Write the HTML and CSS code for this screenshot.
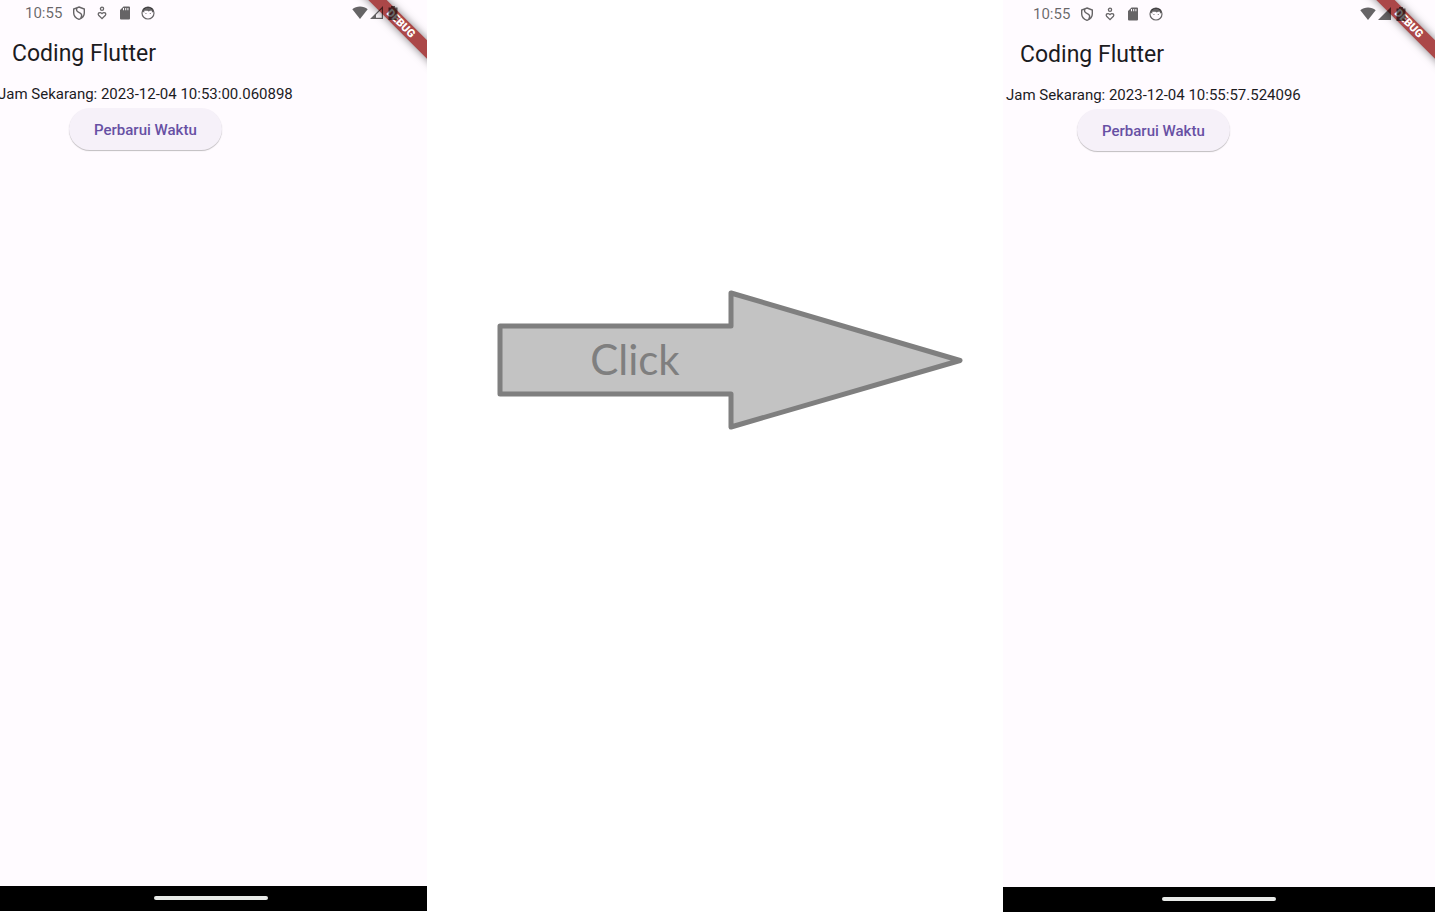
FILE: index.html
```html
<!DOCTYPE html>
<html lang="id">
<head>
<meta charset="utf-8">
<meta name="viewport" content="width=device-width, initial-scale=1">
<title>Coding Flutter</title>
<link rel="stylesheet" href="styles.css">
</head>
<body>
<svg class="defs" aria-hidden="true">
  <symbol id="shield" viewBox="0 0 14 14"><path d="M7 1 12.300 3v4c0 3-2.200 5.200-5.300 6.300C3.900 12.200 1.700 10 1.700 7V3zM5 2c-1.200 2.600.2 3.700 2.300 4.600s3.200 2.400 1.400 5.600" fill="none" stroke="currentColor" stroke-width="1.400"/></symbol>
  <symbol id="heart" viewBox="0 0 14 14"><g fill="none" stroke="currentColor" stroke-width="1.300"><circle cx="7" cy="2.800" r="1.600"/><path d="M7 12.600 3.600 9.200C2.300 7.500 4.800 5.300 7 7.600c2.200-2.300 4.700-.1 3.400 1.600z"/></g></symbol>
  <symbol id="card" viewBox="0 0 14 14"><path fill="currentColor" fill-rule="evenodd" d="M5.500.5H11a1 1 0 0 1 1 1v11a1 1 0 0 1-1 1H3a1 1 0 0 1-1-1V4zM5 2v2.300h1V2zm2.200 0v2.300h1V2zm2.200 0v2.300h1V2z"/></symbol>
  <symbol id="face" viewBox="0 0 14 14"><circle cx="7" cy="7" r="6" fill="none" stroke="currentColor" stroke-width="1.200"/><path fill="currentColor" d="M1.500 5.500 3 2.200 7 .8l4 1.400 1.500 3.300-1.600 1.300V4.800H9L7.800 5.600 6.500 4.800H3.300v2zM4.500 7h.9v.9h-.9zM8.800 7h.9v.9h-.9z"/></symbol>
  <symbol id="wifi" viewBox="0 0 16 13"><path fill="currentColor" d="M8 13 .3 3.300C4.500-.5 11.500-.5 15.700 3.300z"/></symbol>
  <symbol id="signal-low" viewBox="0 0 14 13"><path fill="currentColor" fill-rule="evenodd" d="M13 0v13H0zM11.800 3 6 8.800v3h5.800z"/></symbol>
  <symbol id="signal-full" viewBox="0 0 14 13"><path fill="currentColor" d="M13 0v13H0z"/></symbol>
  <symbol id="battery" viewBox="0 0 10 14"><path fill="currentColor" d="M3 0h4v1.500h2.500V14H.5V1.500H3z"/></symbol>
</svg>
<main class="stage">
  <section class="phone before">
    <header class="status">
      <time class="clock">10:55</time>
      <svg class="icon"><use href="#shield"/></svg>
      <svg class="icon"><use href="#heart"/></svg>
      <svg class="icon"><use href="#card"/></svg>
      <svg class="icon"><use href="#face"/></svg>
      <span class="system">
        <svg class="wifi"><use href="#wifi"/></svg>
        <svg class="signal"><use href="#signal-low"/></svg>
        <svg class="battery"><use href="#battery"/></svg>
      </span>
    </header>
    <div class="ribbon-clip"><span class="ribbon">DEBUG</span></div>
    <h1 class="title">Coding Flutter</h1>
    <div class="content">
      <p class="now">Jam Sekarang: 2023-12-04 10:53:00.060898</p>
      <button class="refresh" type="button">Perbarui Waktu</button>
    </div>
    <footer class="nav"><span class="handle"></span></footer>
  </section>
  <div class="step">
    <svg class="arrow" viewBox="0 0 466 140" role="img" aria-label="Click">
      <path class="arrow-shape" d="M3 36H234V3L463 70.500 234 137V104H3z"/>
      <text class="arrow-label" x="138" y="85" text-anchor="middle">Click</text>
    </svg>
  </div>
  <section class="phone after">
    <header class="status">
      <time class="clock">10:55</time>
      <svg class="icon"><use href="#shield"/></svg>
      <svg class="icon"><use href="#heart"/></svg>
      <svg class="icon"><use href="#card"/></svg>
      <svg class="icon"><use href="#face"/></svg>
      <span class="system">
        <svg class="wifi"><use href="#wifi"/></svg>
        <svg class="signal"><use href="#signal-full"/></svg>
        <svg class="battery"><use href="#battery"/></svg>
      </span>
    </header>
    <div class="ribbon-clip"><span class="ribbon">DEBUG</span></div>
    <h1 class="title">Coding Flutter</h1>
    <div class="content">
      <p class="now">Jam Sekarang: 2023-12-04 10:55:57.524096</p>
      <button class="refresh" type="button">Perbarui Waktu</button>
    </div>
    <footer class="nav"><span class="handle"></span></footer>
  </section>
</main>
</body>
</html>
```
FILE: styles.css
```css
* { box-sizing: border-box; }
body { margin: 0; background: #fff; color: #1c1b1f; font-family: Roboto, sans-serif; }
.defs { position: absolute; width: 0; height: 0; }
.stage { display: grid; grid-template-columns: 427fr 576fr 432fr; min-height: 100vh; }
.phone { position: relative; display: flex; flex-direction: column; overflow: hidden; background: #fffbff; }
.before { margin-bottom: 2px; }
.after { margin-bottom: 1px; padding: 1px 0 0 5px; }
.status { position: relative; z-index: 2; display: flex; align-items: center; gap: 9px; height: 25px; padding: 0 29px 0 25px; color: rgba(0, 0, 0, .6); }
.clock { margin-right: 1px; font-size: 15px; }
.icon { width: 14px; height: 14px; }
.system { display: flex; align-items: center; gap: 2px; margin-left: auto; }
.wifi { width: 16px; height: 13px; }
.signal { width: 14px; height: 13px; }
.battery { width: 10px; height: 14px; margin-left: 2px; }
.ribbon-clip { position: absolute; top: 0; right: 0; width: 90px; height: 90px; overflow: hidden; }
.ribbon { position: absolute; top: 19px; right: -36px; width: 120px; height: 13px; padding-right: 6px; transform: rotate(45deg); background: #ab4748; box-shadow: 0 0 8px rgba(0, 0, 0, .5); color: #fff; font-size: 11px; font-weight: 900; line-height: 13px; text-align: center; }
.title { margin: 0; padding: 13px 12px 11px; font-size: 23px; font-weight: 400; line-height: 32px; }
.content { display: flex; flex-direction: column; align-items: center; align-self: flex-start; flex: 1; margin-left: -2px; padding-top: 4px; }
.now { margin: 0; font-size: 15px; line-height: 18px; white-space: nowrap; }
.refresh { height: 42px; margin-top: 5px; padding: 2px 25px 0; border: 0; border-radius: 21px; background: #f6f1f9; box-shadow: 0 1px 1px rgba(0, 0, 0, .25); color: #6750a4; font: 500 15px Roboto, sans-serif; white-space: nowrap; }
.nav { display: flex; align-items: center; height: 25px; padding: 0 0 1px 154px; background: #000; }
.after .nav { margin-left: -5px; padding-left: 159px; }
.handle { width: 114px; height: 4px; border-radius: 2px; background: #e8eae8; }
.step { padding: 290px 40px 0 70px; }
.arrow { display: block; width: 100%; }
.arrow-shape { fill: #c3c3c3; stroke: #7f7f7f; stroke-width: 5; stroke-linejoin: round; }
.arrow-label { fill: #7f7f7f; font: 42px Lato, sans-serif; }
```
